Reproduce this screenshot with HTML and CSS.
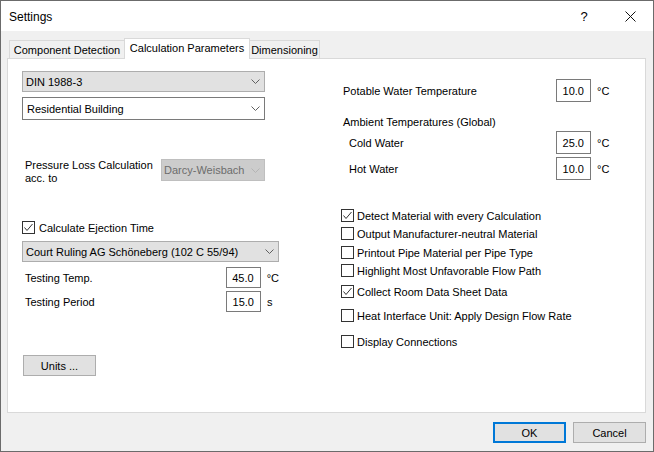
FILE: index.html
```html
<!DOCTYPE html>
<html>
<head>
    <title>Settings</title>
    <link rel="stylesheet" href="styles.css">
</head>
<body>
    <div class="window">
        <!-- Title bar -->
        <div class="titlebar">
            <span class="title">Settings</span>
            <span class="caption-btn">?</span>
            <span class="caption-btn">
                <svg width="11" height="11" viewBox="0 0 11 11"><path d="M0.5 0.5 L10.5 10.5 M10.5 0.5 L0.5 10.5" stroke="#111" stroke-width="1" fill="none"/></svg>
            </span>
        </div>

        <div class="client">
            <!-- Tabs -->
            <div class="tabs">
                <div class="tab tab-component">Component Detection</div>
                <div class="tab tab-active">Calculation Parameters</div>
                <div class="tab tab-dim">Dimensioning</div>
            </div>

            <div class="panel">
                <!-- Left column -->
                <div class="col col-left">
                    <div class="combo combo-std">
                        <span>DIN 1988-3</span>
                        <svg class="arrow" width="9" height="5" viewBox="0 0 9 5"><path d="M0.5 0.5 L4.5 4.5 L8.5 0.5" stroke="#606060" fill="none"/></svg>
                    </div>
                    <div class="combo combo-edit">
                        <span>Residential Building</span>
                        <svg class="arrow" width="9" height="5" viewBox="0 0 9 5"><path d="M0.5 0.5 L4.5 4.5 L8.5 0.5" stroke="#606060" fill="none"/></svg>
                    </div>

                    <div class="pressure-row">
                        <div class="pressure-label">Pressure Loss Calculation<br>acc. to</div>
                        <div class="combo combo-disabled">
                            <span>Darcy-Weisbach</span>
                            <svg class="arrow" width="9" height="5" viewBox="0 0 9 5"><path d="M0.5 0.5 L4.5 4.5 L8.5 0.5" stroke="#b4b4b4" fill="none"/></svg>
                        </div>
                    </div>

                    <div class="check check-ejection">
                        <span class="box checked">
                            <svg width="11" height="11" viewBox="0 0 11 11"><path d="M1.5 5.5 L4 8.5 L9.5 2" stroke="#333" stroke-width="1" fill="none"/></svg>
                        </span>
                        <span>Calculate Ejection Time</span>
                    </div>

                    <div class="combo combo-std combo-court">
                        <span>Court Ruling AG Schöneberg (102 C 55/94)</span>
                        <svg class="arrow" width="9" height="5" viewBox="0 0 9 5"><path d="M0.5 0.5 L4.5 4.5 L8.5 0.5" stroke="#606060" fill="none"/></svg>
                    </div>

                    <div class="field field-left field-temp">
                        <span class="field-label">Testing Temp.</span>
                        <span class="edit">45.0</span>
                        <span class="unit">°C</span>
                    </div>
                    <div class="field field-left field-period">
                        <span class="field-label">Testing Period</span>
                        <span class="edit">15.0</span>
                        <span class="unit">s</span>
                    </div>

                    <div class="button btn-units">Units ...</div>
                </div>

                <!-- Right column -->
                <div class="col col-right">
                    <div class="field field-right field-potable">
                        <span class="field-label">Potable Water Temperature</span>
                        <span class="edit">10.0</span>
                        <span class="unit">°C</span>
                    </div>

                    <div class="group-label">Ambient Temperatures (Global)</div>
                    <div class="field field-right field-sub field-cold">
                        <span class="field-label">Cold Water</span>
                        <span class="edit">25.0</span>
                        <span class="unit">°C</span>
                    </div>
                    <div class="field field-right field-sub field-hot">
                        <span class="field-label">Hot Water</span>
                        <span class="edit">10.0</span>
                        <span class="unit">°C</span>
                    </div>

                    <div class="checks">
                        <div class="check c1">
                            <span class="box checked">
                                <svg width="11" height="11" viewBox="0 0 11 11"><path d="M1.5 5.5 L4 8.5 L9.5 2" stroke="#333" stroke-width="1" fill="none"/></svg>
                            </span>
                            <span>Detect Material with every Calculation</span>
                        </div>
                        <div class="check c2">
                            <span class="box"></span>
                            <span>Output Manufacturer-neutral Material</span>
                        </div>
                        <div class="check c3">
                            <span class="box"></span>
                            <span>Printout Pipe Material per Pipe Type</span>
                        </div>
                        <div class="check c4">
                            <span class="box"></span>
                            <span>Highlight Most Unfavorable Flow Path</span>
                        </div>
                        <div class="check c5">
                            <span class="box checked">
                                <svg width="11" height="11" viewBox="0 0 11 11"><path d="M1.5 5.5 L4 8.5 L9.5 2" stroke="#333" stroke-width="1" fill="none"/></svg>
                            </span>
                            <span>Collect Room Data Sheet Data</span>
                        </div>
                        <div class="check c6">
                            <span class="box"></span>
                            <span>Heat Interface Unit: Apply Design Flow Rate</span>
                        </div>
                        <div class="check c7">
                            <span class="box"></span>
                            <span>Display Connections</span>
                        </div>
                    </div>
                </div>
            </div>

            <!-- Dialog buttons -->
            <div class="footer">
                <div class="button btn-ok">OK</div>
                <div class="button btn-cancel">Cancel</div>
            </div>
        </div>
    </div>
</body>
</html>
```

FILE: styles.css
```css
/* Windows style settings dialog */
body {
    margin: 0;
    font-family: "Liberation Sans", Arial, sans-serif;
    font-size: 11px;
    color: #000;
    background: #fff;
    white-space: nowrap;
}

.window {
    width: 654px;
    height: 452px;
    box-sizing: border-box;
    border: 1px solid #6b6b6b;
    display: flex;
    flex-direction: column;
}

/* Title bar */
.titlebar {
    height: 30px;
    display: flex;
    align-items: center;
    background: #fff;
    flex: none;
}
.title {
    flex: 1;
    padding-left: 8px;
    margin-top: 1px;
    font-size: 12px;
}
.caption-btn {
    width: 46px;
    height: 30px;
    display: flex;
    align-items: center;
    justify-content: center;
    font-size: 13px;
}

.client {
    flex: 1;
    background: #f0f0f0;
    display: flex;
    flex-direction: column;
}

/* Tabs */
.tabs {
    display: flex;
    align-items: flex-end;
    height: 20px;
    margin-top: 7px;
    padding-left: 8px;
}
.tab {
    box-sizing: border-box;
    height: 18px;
    border: 1px solid #d9d9d9;
    border-bottom: none;
    background: #f0f0f0;
    display: flex;
    align-items: center;
    justify-content: center;
    padding-top: 1px;
}
.tab-component {
    width: 115px;
    border-right: none;
}
.tab-active {
    width: 126px;
    height: 21px;
    background: #fff;
    margin-bottom: -1px;
    position: relative;
    padding-top: 0;
    padding-bottom: 2px;
}
.tab-dim {
    width: 70px;
    border-left: none;
}

/* Tab panel */
.panel {
    box-sizing: border-box;
    height: 355px;
    margin: 0 7px 0 6px;
    background: #fff;
    border: 1px solid #d9d9d9;
    display: grid;
    grid-template-columns: 257px 1fr;
    column-gap: 62px;
    padding-left: 14px;
}
.col {
    display: flex;
    flex-direction: column;
}

/* Combo boxes */
.combo {
    box-sizing: border-box;
    display: flex;
    align-items: center;
    justify-content: space-between;
    border: 1px solid #adadad;
    background: #e1e1e1;
    padding: 0 4px 0 3px;
}
.arrow {
    flex: none;
}
.combo-std {
    width: 243px;
    height: 21px;
    margin-top: 12px;
}
.combo-edit {
    width: 243px;
    height: 23px;
    margin-top: 5px;
    background: #fff;
    border-color: #7a7a7a;
    padding-left: 4px;
}
.combo-disabled {
    width: 104px;
    height: 22px;
    background: #cccccc;
    border-color: #bfbfbf;
    color: #6d6d6d;
    padding-left: 2px;
}
.combo-court {
    width: 257px;
    margin-top: 7px;
}

.pressure-row {
    display: flex;
    justify-content: space-between;
    align-items: flex-start;
    width: 243px;
    height: 22px;
    margin-top: 39px;
}
.pressure-label {
    line-height: 13px;
    padding-left: 3px;
}

/* Check boxes */
.check {
    display: flex;
    align-items: center;
    height: 13px;
}
.box {
    box-sizing: border-box;
    width: 13px;
    height: 13px;
    border: 1px solid #333;
    background: #fff;
    margin-right: 3px;
    display: flex;
    align-items: center;
    justify-content: center;
    flex: none;
}
.check-ejection {
    margin-top: 40px;
}
.check-ejection .box {
    margin-right: 4px;
}

/* Label + edit + unit rows */
.field {
    display: flex;
    align-items: center;
}
.field-label {
    box-sizing: border-box;
}
.field-left .field-label {
    width: 204px;
    padding-left: 3px;
}
.field-right .field-label {
    width: 215px;
    padding-left: 2px;
}
.field-right.field-sub .field-label {
    padding-left: 8px;
}
.edit {
    box-sizing: border-box;
    width: 35px;
    height: 21px;
    border: 1px solid #7a7a7a;
    background: #fff;
    display: flex;
    align-items: center;
    justify-content: flex-end;
    padding-right: 6px;
}
.field-right .edit {
    height: 23px;
}
.unit {
    margin-left: 6px;
}
.field-temp {
    margin-top: 5px;
}
.field-period {
    margin-top: 3px;
}
.field-potable {
    margin-top: 20px;
}
.group-label {
    margin-top: 12px;
    line-height: 16px;
    padding-left: 2px;
}
.field-cold {
    margin-top: 1px;
}
.field-hot {
    margin-top: 3px;
}

.checks {
    display: flex;
    flex-direction: column;
}
.c1 { margin-top: 29px; }
.c2 { margin-top: 5px; }
.c3 { margin-top: 6px; }
.c4 { margin-top: 5px; }
.c5 { margin-top: 8px; }
.c6 { margin-top: 11px; }
.c7 { margin-top: 13px; }

/* Push buttons */
.button {
    box-sizing: border-box;
    width: 73px;
    height: 21px;
    border: 1px solid #adadad;
    background: #e1e1e1;
    display: flex;
    align-items: center;
    justify-content: center;
}
.btn-units {
    margin-top: 43px;
    margin-left: 1px;
}
.footer {
    display: flex;
    justify-content: flex-end;
    gap: 7px;
    margin-top: 9px;
    padding-right: 7px;
}
.btn-ok {
    border: 2px solid #0078d7;
}
```
